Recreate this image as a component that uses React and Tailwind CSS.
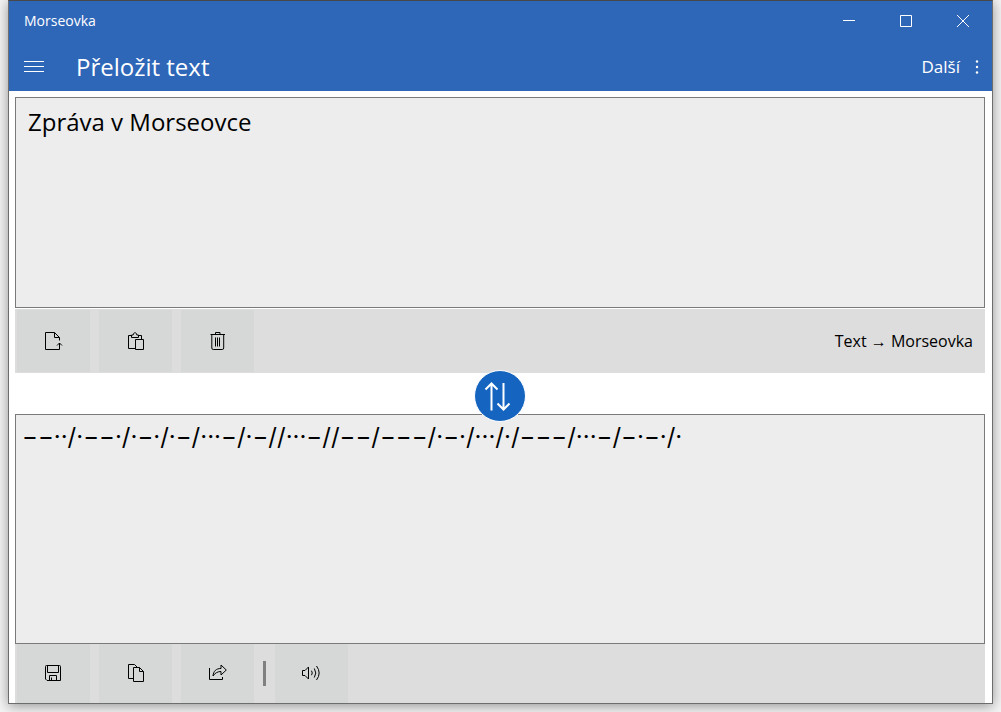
import React, { useState } from "react";

const MESSAGE = "Zpráva v Morseovce";
const MORSE = "−−··/·−−·/·−·/·−/···−/·−//···−//−−/−−−/·−·/···/·/−−−/···−/−·−·/·";

function Icon({ children }) {
  return (
    <svg
      viewBox="0 0 20 20"
      className="size-5"
      fill="none"
      stroke="currentColor"
      strokeWidth="1"
      aria-hidden="true"
    >
      {children}
    </svg>
  );
}

const OpenFileIcon = () => (
  <Icon>
    <path d="M13 18.500H1.500V1.500H10.500L15.500 6.500V9.500M10.500 1.500V6.500H15.500M12.500 18.500H15.500V12M13 14.500L15.500 12L18 14.500" />
  </Icon>
);

const PasteIcon = () => (
  <Icon>
    <path d="M9 17.500H2.500V4.500H5.500M12.500 4.500H15.500V8M5.500 4V6.500H12.500V4H10.800C10.800 1 7.200 1 7.200 4Z" />
    <path d="M9.500 8.500H17.500V18.500H9.500Z" />
  </Icon>
);

const DeleteIcon = () => (
  <Icon>
    <path d="M2.500 3.500H17M7.500 3.500V1.500H12V3.500M3.800 3.500V17Q3.800 18.500 5.300 18.500H14.200Q15.700 18.500 15.700 17V3.500M7.500 6.500V15.500M9.500 6.500V15.500M11.500 6.500V15.500" />
  </Icon>
);

const SaveIcon = () => (
  <Icon>
    <path d="M2.500 2.500H15.500Q16.500 2.500 16.500 3.500V17.500H3L1.500 16V3.500Q1.500 2.500 2.500 2.500ZM3.500 2.500V9.500H14.500V2.500M5.500 17.500V12.500H12.500V17.500M7.500 17.500V14.500" />
  </Icon>
);

const CopyIcon = () => (
  <Icon>
    <path d="M7 15.500H2.500V1.500H8.500L11 4" />
    <path d="M7.500 4.500H13.500L17.500 8.500V18.500H7.500ZM13.500 4.500V8.500H17.500" />
  </Icon>
);

const ShareIcon = () => (
  <Icon>
    <path d="M1.500 5V16.500H14.500V14M5 13C5.500 8 8 5.500 13 5.500V2L18.300 7L13 12V8.500C9.500 8.500 7 10 5 13Z" />
  </Icon>
);

const SoundIcon = () => (
  <Icon>
    <path d="M.5 7.500H3L6.500 4V16L3 12.500H.5ZM9.500 7.700Q11 10 9.500 12.200M12.300 5.500Q15.300 10 12.300 14.500M14.500 3Q19.800 10 14.500 17" />
  </Icon>
);

function ToolButton({ label, children }) {
  return (
    <button
      type="button"
      aria-label={label}
      className="flex w-[73px] items-center justify-center bg-[#d6d8d7] pb-px hover:bg-[#cbcdcc]"
    >
      {children}
    </button>
  );
}

function CaptionButton({ label, children }) {
  return (
    <button type="button" aria-label={label} className="flex w-[57px] items-center justify-center hover:bg-white/10">
      <svg viewBox="0 0 13 13" className="size-[13px]" fill="none" stroke="currentColor" aria-hidden="true">
        {children}
      </svg>
    </button>
  );
}

export default function App() {
  const [message, setMessage] = useState(MESSAGE);
  const [morse, setMorse] = useState(MORSE);

  return (
    <div className="h-screen bg-[#f4f4f4] px-2 pb-2 font-['Open_Sans','Noto_Sans',sans-serif] text-black">
      <div className="flex h-full flex-col border border-[#6d6d6d] border-t-[#484848] bg-white shadow-[0_2px_12px_rgba(0,0,0,0.4)]">
        <header className="bg-[#2e66b8] text-white">
          <div className="flex h-10 justify-between">
            <span className="self-center pl-[15px] text-sm">Morseovka</span>
            <div className="flex">
              <CaptionButton label="Minimalizovat">
                <path d="M0 5.500H12" />
              </CaptionButton>
              <CaptionButton label="Maximalizovat">
                <path d="M.5 .5H11.500V11.500H.5Z" />
              </CaptionButton>
              <CaptionButton label="Zavřít">
                <path d="M0 0L12 12M12 0L0 12" />
              </CaptionButton>
            </div>
          </div>
          <div className="flex h-[50px] items-center justify-between pt-[2px] pr-[10px] pl-[15px]">
            <div className="flex items-center gap-8">
              <button type="button" aria-label="Nabídka">
                <svg viewBox="0 0 20 12" className="h-3 w-5" stroke="currentColor" aria-hidden="true">
                  <path d="M0 .5H20M0 5.500H20M0 10.500H20" />
                </svg>
              </button>
              <h1 className="text-2xl">Přeložit text</h1>
            </div>
            <button type="button" className="flex items-center gap-3 text-[17px]">
              Další
              <svg viewBox="0 0 10 16" className="h-4 w-[10px]" fill="currentColor" aria-hidden="true">
                <circle cx="5" cy="2.500" r="1.200" />
                <circle cx="5" cy="8" r="1.200" />
                <circle cx="5" cy="13.500" r="1.200" />
              </svg>
            </button>
          </div>
        </header>

        <main className="flex min-h-0 flex-1 flex-col pt-[6px] pr-[7px] pl-[6px]">
          <textarea
            aria-label="Text"
            spellCheck={false}
            value={message}
            onChange={(e) => setMessage(e.target.value)}
            className="min-h-0 flex-[193] resize-none border border-[#7a7a7a] bg-[#ededed] px-3 py-2 text-2xl outline-none"
          />
          <div className="mt-px flex h-16 items-stretch justify-between bg-[#dddddd] py-px pr-3 pl-[2px]">
            <div className="flex gap-[9px]">
              <ToolButton label="Otevřít soubor"><OpenFileIcon /></ToolButton>
              <ToolButton label="Vložit"><PasteIcon /></ToolButton>
              <ToolButton label="Vymazat"><DeleteIcon /></ToolButton>
            </div>
            <span className="self-center text-base">Text → Morseovka</span>
          </div>

          <div className="z-10 flex h-[41px] items-center justify-center pt-1">
            <button
              type="button"
              aria-label="Zaměnit směr překladu"
              className="flex size-[52px] shrink-0 items-center justify-center rounded-full border border-white bg-[#1565c0] text-white"
            >
              <svg viewBox="0 0 50 50" className="size-[50px]" fill="none" stroke="currentColor" strokeWidth="2" aria-hidden="true">
                <path d="M16.500 39.500V12.500M10.500 18.500L16.500 12.500L22.500 18.500M28.500 12V38.500M22.500 32.500L28.500 38.500L34.500 32.500" />
              </svg>
            </button>
          </div>

          <textarea
            aria-label="Morseovka"
            spellCheck={false}
            value={morse}
            onChange={(e) => setMorse(e.target.value)}
            className="min-h-0 flex-[220] resize-none border border-[#7a7a7a] bg-[#ededed] px-[6px] py-1 font-['Inter','Open_Sans',sans-serif] text-2xl leading-9 outline-none"
          />
          <div className="flex h-[59px] items-stretch gap-[9px] bg-[#dddddd] pl-[2px]">
            <ToolButton label="Uložit"><SaveIcon /></ToolButton>
            <ToolButton label="Kopírovat"><CopyIcon /></ToolButton>
            <ToolButton label="Sdílet"><ShareIcon /></ToolButton>
            <div className="h-[25px] w-[3px] self-center bg-[#808080]" />
            <ToolButton label="Přehrát"><SoundIcon /></ToolButton>
          </div>
        </main>
      </div>
    </div>
  );
}
